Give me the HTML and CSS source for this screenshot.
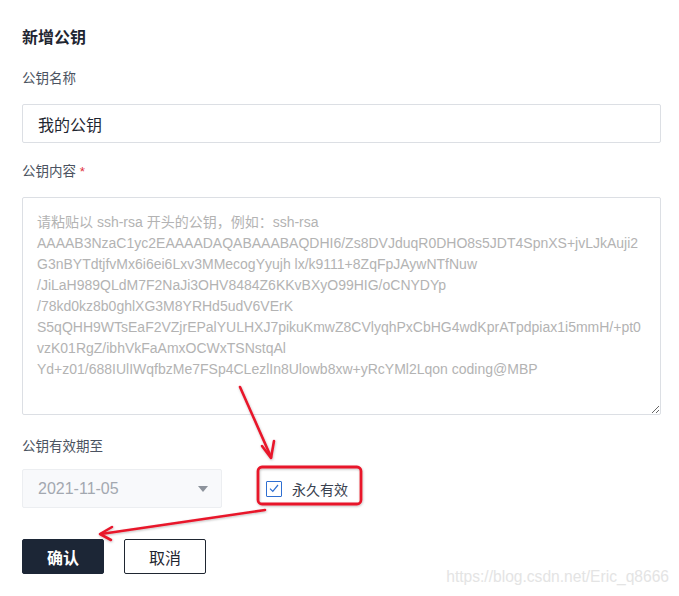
FILE: index.html
```html
<!DOCTYPE html>
<html lang="zh-CN">
<head>
<meta charset="utf-8">
<title>新增公钥</title>
<link rel="stylesheet" href="styles.css">
</head>
<body>
<form class="form">
  <h2 class="title">新增公钥</h2>
  <label class="label label-first">公钥名称</label>
  <input class="input" type="text" value="我的公钥">
  <label class="label">公钥内容 <span class="req">*</span></label>
  <textarea class="textarea" placeholder="请粘贴以 ssh-rsa 开头的公钥，例如：ssh-rsa&#10;AAAAB3NzaC1yc2EAAAADAQABAAABAQDHI6/Zs8DVJduqR0DHO8s5JDT4SpnXS+jvLJkAuji2&#10;G3nBYTdtjfvMx6i6ei6Lxv3MMecogYyujh lx/k9111+8ZqFpJAywNTfNuw&#10;/JiLaH989QLdM7F2NaJi3OHV8484Z6KKvBXyO99HIG/oCNYDYp&#10;/78kd0kz8b0ghlXG3M8YRHd5udV6VErK&#10;S5qQHH9WTsEaF2VZjrEPalYULHXJ7pikuKmwZ8CVlyqhPxCbHG4wdKprATpdpiax1i5mmH/+pt0&#10;vzK01RgZ/ibhVkFaAmxOCWxTSNstqAl&#10;Yd+z01/688IUlIWqfbzMe7FSp4CLezlIn8Ulowb8xw+yRcYMl2Lqon coding@MBP"></textarea>
  <label class="label label-expire">公钥有效期至</label>
  <div class="expire-row">
    <div class="select">
      <span class="select-value">2021-11-05</span>
      <span class="caret"></span>
    </div>
    <label class="check">
      <span class="check-box">
        <svg width="10" height="9" viewBox="0 0 10 9"><path d="M1 4.6 L3.8 7.4 L9 1" fill="none" stroke="#2f6fd1" stroke-width="1.2"/></svg>
      </span>
      <span class="check-text">永久有效</span>
    </label>
  </div>
  <div class="actions">
    <button type="button" class="btn btn-primary">确认</button>
    <button type="button" class="btn btn-default">取消</button>
  </div>
</form>

<svg class="annot" width="679" height="596" viewBox="0 0 679 596">
  <defs>
    <filter id="sh" x="-20%" y="-20%" width="140%" height="140%">
      <feDropShadow dx="0.5" dy="1" stdDeviation="1" flood-color="#000" flood-opacity="0.25"/>
    </filter>
  </defs>
  <g filter="url(#sh)" stroke="#e8172b" fill="none" stroke-linecap="round" stroke-linejoin="round">
    <line x1="240" y1="387" x2="271" y2="457" stroke-width="2.6"/>
    <polyline points="262,446 271,458 274,441" stroke-width="2.6"/>
    <rect x="258" y="467" width="103" height="37" rx="4" stroke-width="2.8"/>
    <line x1="265" y1="510" x2="101" y2="534" stroke-width="2.6"/>
    <polyline points="112,527 100,534 111,540" stroke-width="2.6"/>
  </g>
</svg>
<div class="watermark">https://blog.csdn.net/Eric_q8666</div>
</body>
</html>
```
FILE: styles.css
```css
html, body {
  margin: 0;
  padding: 0;
  background: #ffffff;
}
body {
  width: 679px;
  height: 596px;
  position: relative;
  overflow: hidden;
  font-family: "Liberation Sans", "Noto Sans CJK SC", sans-serif;
  color: #1f2937;
}
.form {
  display: flex;
  flex-direction: column;
  align-items: flex-start;
  padding: 28px 18px 0 22px;
}
.title {
  margin: 0;
  font-size: 16px;
  line-height: 20px;
  font-weight: bold;
  color: #1f2631;
}
.label {
  display: block;
  margin-top: 19px;
  font-size: 13.5px;
  line-height: 20px;
  color: #4b5361;
}
.label-first {
  margin-top: 21px;
}
.label-expire {
  margin-top: 22px;
}
.req {
  color: #e0303d;
}
.input {
  box-sizing: border-box;
  margin-top: 15px;
  width: 639px;
  height: 39px;
  border: 1px solid #dcdfe4;
  border-radius: 2px;
  padding: 0 15px;
  font-family: "Liberation Sans", "Noto Sans CJK SC", sans-serif;
  font-size: 16px;
  color: #1f2631;
  outline: none;
}
.textarea {
  box-sizing: border-box;
  margin-top: 15px;
  width: 639px;
  height: 218px;
  border: 1px solid #dcdfe4;
  border-radius: 2px;
  padding: 14px 14px;
  font-family: "Liberation Sans", "Noto Sans CJK SC", sans-serif;
  font-size: 14px;
  line-height: 21px;
  color: #1f2631;
  outline: none;
  resize: vertical;
}
.textarea::placeholder {
  color: #b3b3b3;
}
.expire-row {
  display: flex;
  align-items: center;
  margin-top: 12px;
}
.select {
  box-sizing: border-box;
  width: 200px;
  height: 39px;
  display: flex;
  align-items: center;
  justify-content: space-between;
  padding: 0 13px 0 15px;
  background: #f8f9fb;
  border: 1px solid #eceef1;
  border-radius: 2px;
}
.select-value {
  font-size: 16px;
  color: #a3a8b0;
}
.caret {
  width: 0;
  height: 0;
  border-left: 5px solid transparent;
  border-right: 5px solid transparent;
  border-top: 6px solid #8d939c;
}
.check {
  display: flex;
  align-items: center;
  margin-left: 44px;
}
.check-box {
  box-sizing: border-box;
  width: 16px;
  height: 16px;
  border: 1px solid #2f6fd1;
  border-radius: 1px;
  display: flex;
  align-items: center;
  justify-content: center;
}
.check-text {
  margin-left: 10px;
  font-size: 14px;
  color: #3a4250;
}
.actions {
  display: flex;
  gap: 20px;
  margin-top: 31px;
}
.btn {
  box-sizing: border-box;
  width: 82px;
  height: 35px;
  border-radius: 2px;
  font-family: "Liberation Sans", "Noto Sans CJK SC", sans-serif;
  font-size: 16px;
  padding: 0;
}
.btn-primary {
  background: #1c2636;
  border: 1px solid #1c2636;
  color: #ffffff;
  font-weight: bold;
}
.btn-default {
  background: #ffffff;
  border: 1px solid #1f2631;
  color: #1f2631;
}
.annot {
  position: absolute;
  left: 0;
  top: 0;
  pointer-events: none;
}
.watermark {
  position: absolute;
  right: 10px;
  top: 567px;
  font-family: "Liberation Sans", sans-serif;
  font-size: 15.6px;
  line-height: 20px;
  color: #e4e4e4;
}
```
